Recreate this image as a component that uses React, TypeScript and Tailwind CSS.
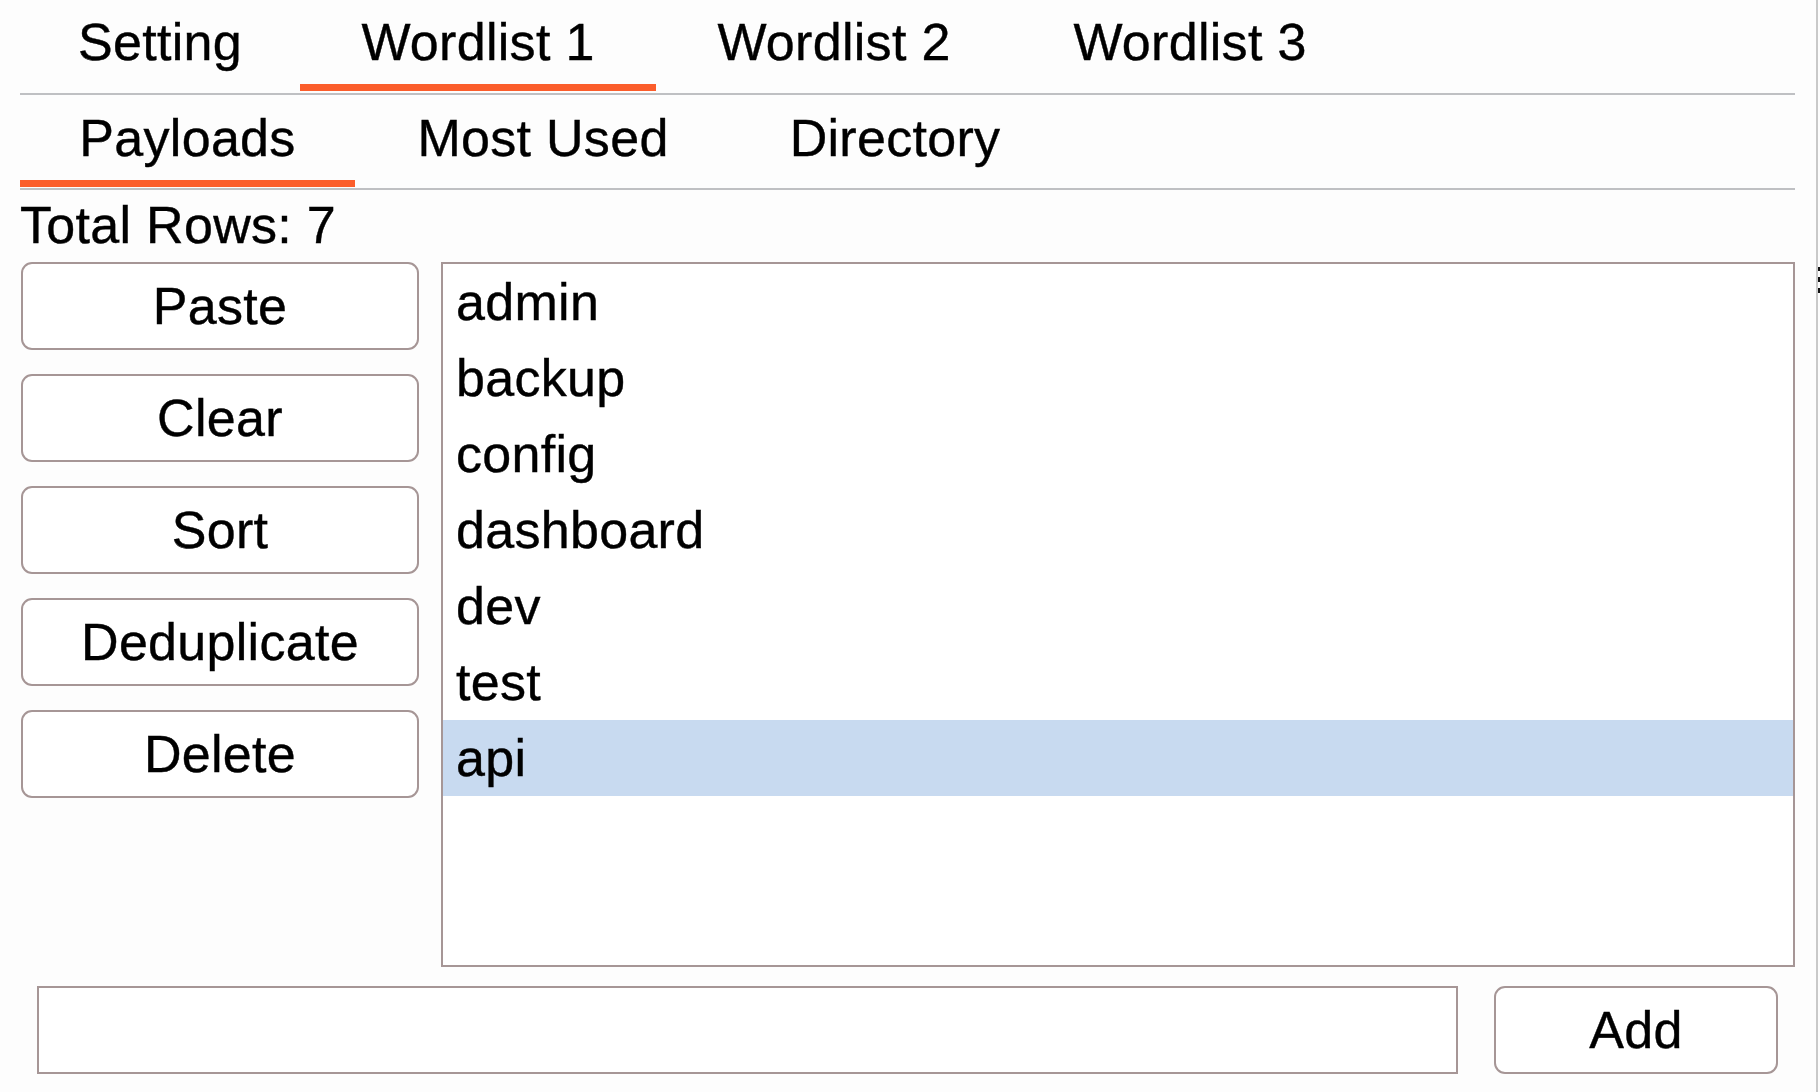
import React from "react";

const font = "font-['Liberation_Sans',Arial,Helvetica,sans-serif]";

function TopTab({ label, width, active }: { label: string; width: string; active?: boolean }) {
  return (
    <div className={`flex flex-col ${width}`}>
      <div className="flex h-[84px] items-center justify-center leading-[52px]">{label}</div>
      <div className={`h-[7px] ${active ? "bg-[#fb5d2b]" : ""}`} />
    </div>
  );
}

function SubTab({ label, width, active }: { label: string; width: string; active?: boolean }) {
  return (
    <div className={`flex flex-col ${width}`}>
      <div className="flex h-[85px] items-center justify-center leading-[52px]">{label}</div>
      <div className={`h-[7px] ${active ? "bg-[#fb5d2b]" : ""}`} />
    </div>
  );
}

function Btn({ label }: { label: string }) {
  return (
    <button className="flex h-[88px] w-full items-center justify-center rounded-[11px] border-2 border-[#a69696] bg-white leading-[52px]">
      {label}
    </button>
  );
}

export default function App() {
  const items = ["admin", "backup", "config", "dashboard", "dev", "test", "api"];
  return (
    <div
      className={`flex h-[1092px] w-[1820px] bg-[#fdfdfd] text-[52px] tracking-[0.3px] text-black [-webkit-text-stroke:0.4px_#000] ${font}`}
    >
      <div className="ml-[20px] flex w-[1775px] flex-col">
        {/* top tabs */}
        <div className="flex h-[95px] border-b-2 border-[#bfc0c3]">
          <TopTab label="Setting" width="w-[280px]" />
          <TopTab label="Wordlist 1" width="w-[356px]" active />
          <TopTab label="Wordlist 2" width="w-[356px]" />
          <TopTab label="Wordlist 3" width="w-[356px]" />
        </div>
        {/* sub tabs */}
        <div className="flex h-[95px] border-b-2 border-[#bfc0c3]">
          <SubTab label="Payloads" width="w-[335px]" active />
          <SubTab label="Most Used" width="w-[376px]" />
          <SubTab label="Directory" width="w-[328px]" />
        </div>
        <div className="mt-[9px] mb-[11px] h-[52px] leading-[52px]">Total Rows: 7</div>
        {/* main */}
        <div className="flex h-[705px] gap-[22px]">
          <div className="flex w-[399px] flex-col gap-[24px] pl-[1px]">
            <Btn label="Paste" />
            <Btn label="Clear" />
            <Btn label="Sort" />
            <Btn label="Deduplicate" />
            <Btn label="Delete" />
          </div>
          <div className="flex flex-1 flex-col border-2 border-[#a69696] bg-white">
            {items.map((it) => (
              <div
                key={it}
                className={`flex h-[76px] items-center px-[13px] leading-[52px] ${it === "api" ? "bg-[#c8daf0]" : ""}`}
              >
                {it}
              </div>
            ))}
          </div>
        </div>
        {/* bottom */}
        <div className="mt-[19px] flex h-[88px] gap-[36px] pl-[17px]">
          <div className="h-full w-[1421px] border-2 border-[#a69696] bg-white" />
          <button className="flex h-full w-[284px] items-center justify-center rounded-[11px] border-2 border-[#a69696] bg-white leading-[52px]">
            Add
          </button>
        </div>
      </div>
      <div className="w-[21px]" />
      <div className="flex w-[4px] flex-col border-l-2 border-[#c9c9c9] pt-[267px]">
        <div className="flex flex-col gap-[6px]">
          <div className="h-[4px] w-[3px] bg-[#111]" />
          <div className="h-[5px] w-[3px] bg-[#111]" />
          <div className="h-[5px] w-[3px] bg-[#111]" />
        </div>
      </div>
    </div>
  );
}
